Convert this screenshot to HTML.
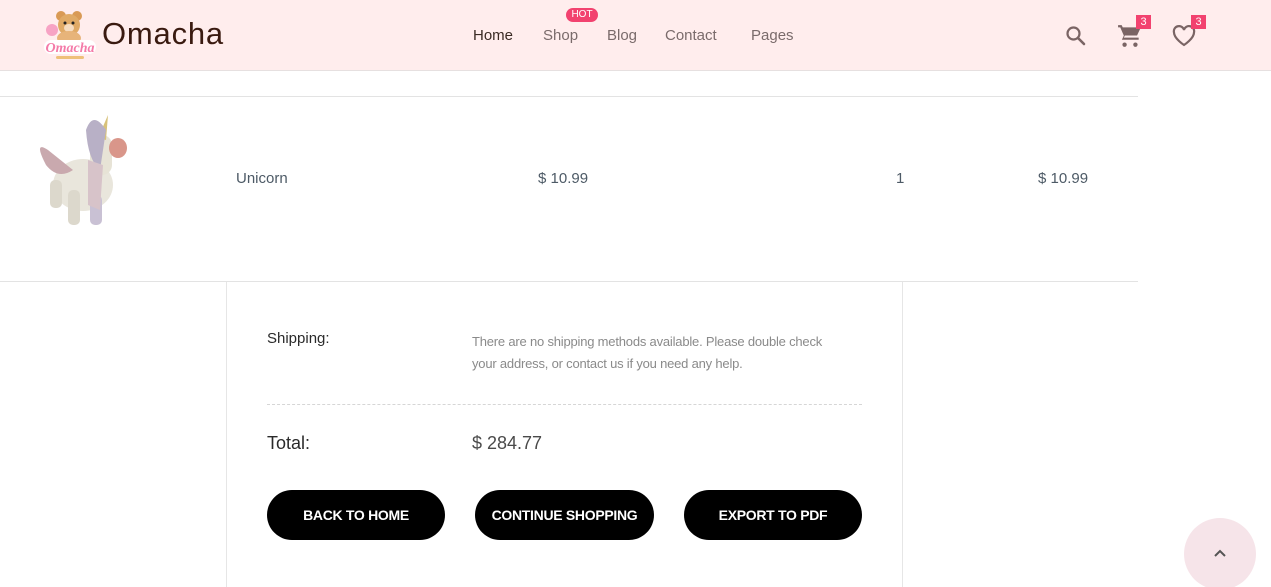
<!DOCTYPE html>
<html><head><meta charset="utf-8"><style>
*{margin:0;padding:0;box-sizing:border-box}
html,body{width:1271px;height:587px;overflow:hidden}
body{background:#fff;font-family:"Liberation Sans",sans-serif;position:relative}
.hdr{position:absolute;left:0;top:0;width:1271px;height:71px;background:#ffeded;border-bottom:1px solid #e6e0e0}
.logo{position:absolute;left:102px;top:16px;font-size:31px;color:#3a1a10;letter-spacing:.8px}
.nav{position:absolute;top:27px;font-size:15px;color:#7a6b6b}
.hot{position:absolute;left:566px;top:8px;width:32px;height:14px;border-radius:7px;background:#f2426f;color:#fff;font-size:10px;text-align:center;line-height:14px}
.badge{position:absolute;width:15px;height:14px;background:#f2426f;color:#fff;font-size:11px;text-align:center;line-height:14px}
.ln{position:absolute;left:0;width:1138px;height:1px;background:#e3e3e3}
.cell{position:absolute;top:170px;font-size:15px;color:#4d5a66}
.box{position:absolute;left:226px;top:282px;width:677px;height:320px;border:1px solid #e6e6e6;border-top:none}
.btn{position:absolute;top:490px;height:50px;border-radius:25px;background:#000;color:#fff;font-weight:bold;font-size:14px;text-align:center;line-height:50px;letter-spacing:-.3px}
</style></head><body>
<div class="hdr">
 <svg style="position:absolute;left:40px;top:10px" width="60" height="52" viewBox="0 0 60 52">
  <circle cx="12" cy="20" r="6" fill="#f7a3c4"/>
  <circle cx="21" cy="6" r="5" fill="#d99a55"/><circle cx="37" cy="6" r="5" fill="#d99a55"/>
  <circle cx="29" cy="15" r="11" fill="#e0aa66"/><ellipse cx="29" cy="18" rx="5" ry="4" fill="#f6dcc0"/>
  <circle cx="25" cy="13" r="1.5" fill="#222"/><circle cx="33" cy="13" r="1.5" fill="#222"/>
  <ellipse cx="29" cy="28" rx="12" ry="7" fill="#e7b47a"/>
  <rect x="4" y="30" width="52" height="14" rx="7" fill="#fff"/>
  <text x="30" y="42" text-anchor="middle" font-family="Liberation Serif" font-style="italic" font-weight="bold" font-size="14" fill="#f47aa8">Omacha</text>
  <rect x="16" y="46" width="28" height="3" rx="1.5" fill="#eec07a"/>
 </svg>
 <div class="logo">Omacha</div>
 <div class="nav" style="left:473px;color:#3a2a24">Home</div>
 <div class="nav" style="left:543px">Shop</div>
 <div class="hot">HOT</div>
 <div class="nav" style="left:607px">Blog</div>
 <div class="nav" style="left:665px">Contact</div>
 <div class="nav" style="left:751px">Pages</div>
 <svg style="position:absolute;left:1064px;top:24px" width="24" height="24" viewBox="0 0 24 24"><circle cx="9.5" cy="9.5" r="6" fill="none" stroke="#7a6464" stroke-width="2.2"/><path d="M14 14l6 6" stroke="#7a6464" stroke-width="2.6" stroke-linecap="round"/></svg>
 <svg style="position:absolute;left:1117px;top:23px" width="26" height="26" viewBox="0 0 24 24"><path d="M1 2h3.3l1 2H22l-3.5 7.5H7.3L6.2 13.5H20V15.5H4.5L6.3 11.7 3 4H1z" fill="#7a6464"/><circle cx="7" cy="20" r="2" fill="#7a6464"/><circle cx="17" cy="20" r="2" fill="#7a6464"/></svg>
 <div class="badge" style="left:1136px;top:15px">3</div>
 <svg style="position:absolute;left:1172px;top:25px" width="24" height="22" viewBox="0 0 24 22"><path d="M12 20S2 13.5 2 7.5A5 5 0 0 1 12 5a5 5 0 0 1 10 2.5C22 13.5 12 20 12 20z" fill="none" stroke="#7a6464" stroke-width="2.2"/></svg>
 <div class="badge" style="left:1191px;top:15px">3</div>
</div>
<div class="ln" style="top:96px"></div>
<svg style="position:absolute;left:28px;top:110px" width="104" height="122" viewBox="0 0 104 122">
 <ellipse cx="55" cy="75" rx="30" ry="26" fill="#e9e6dc"/>
 <path d="M20 40 Q5 30 18 55 Q30 70 45 60z" fill="#c9a9ae"/>
 <rect x="62" y="25" width="22" height="40" rx="10" fill="#e7e3d6"/>
 <ellipse cx="90" cy="38" rx="9" ry="10" fill="#d9968a"/>
 <path d="M70 28 L80 5 L78 30z" fill="#d8c27a"/>
 <path d="M58 20 Q65 0 78 20 L72 60 Q60 50 58 20z" fill="#b8b0c6"/>
 <rect x="40" y="80" width="12" height="35" rx="5" fill="#dcd8cc"/>
 <rect x="62" y="85" width="12" height="30" rx="5" fill="#c9c1d4"/>
 <rect x="22" y="70" width="12" height="28" rx="5" fill="#dcd8cc"/>
 <path d="M60 50 L75 55 L72 100 L60 95z" fill="#d7c3c9"/>
</svg>
<div class="cell" style="left:236px">Unicorn</div>
<div class="cell" style="left:538px">$ 10.99</div>
<div class="cell" style="left:896px">1</div>
<div class="cell" style="left:1038px">$ 10.99</div>
<div class="ln" style="top:281px"></div>
<div class="box"></div>
<div style="position:absolute;left:267px;top:330px;font-size:15px;color:#2a2a2a">Shipping:</div>
<div style="position:absolute;left:472px;top:331px;width:368px;font-size:13px;line-height:22px;color:#8a8a8a;letter-spacing:-.2px">There are no shipping methods available. Please double check your address, or contact us if you need any help.</div>
<div style="position:absolute;left:267px;top:404px;width:595px;border-top:1px dashed #d6d6d6"></div>
<div style="position:absolute;left:267px;top:433px;font-size:18px;color:#2a2a2a">Total:</div>
<div style="position:absolute;left:472px;top:433px;font-size:18px;color:#4a4a4a">$ 284.77</div>
<div class="btn" style="left:267px;width:178px">BACK TO HOME</div>
<div class="btn" style="left:475px;width:179px">CONTINUE SHOPPING</div>
<div class="btn" style="left:684px;width:178px">EXPORT TO PDF</div>
<div style="position:absolute;left:1184px;top:518px;width:72px;height:72px;border-radius:50%;background:#f6e4e9"></div>
<svg style="position:absolute;left:1213px;top:548px" width="14" height="10" viewBox="0 0 14 10"><path d="M2 8l5-5 5 5" fill="none" stroke="#555" stroke-width="2"/></svg>
</body></html>
